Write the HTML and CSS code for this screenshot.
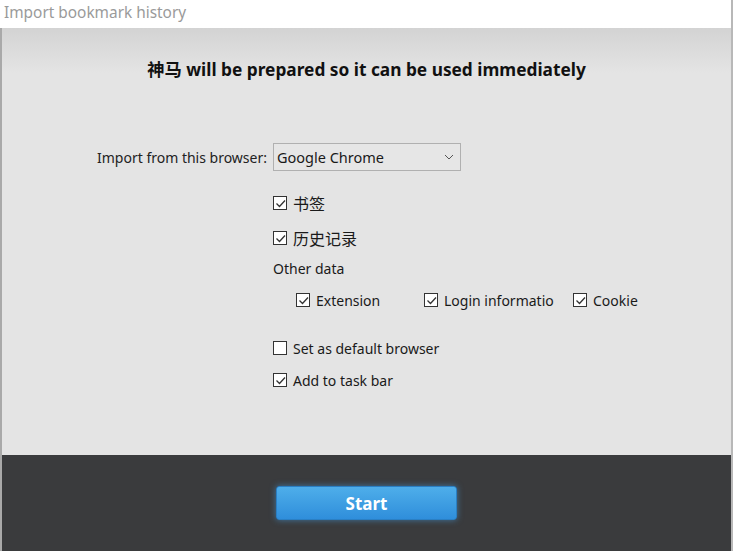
FILE: index.html
```html
<!DOCTYPE html>
<html lang="en">
<head>
    <meta charset="UTF-8">
    <title>Import bookmark history</title>
    <link rel="stylesheet" href="styles.css">
</head>
<body>
<div class="window">

    <!-- Title Bar -->
    <div class="titlebar">Import bookmark history</div>

    <!-- Main Panel -->
    <div class="panel">
        <h1 class="heading">神马 will be prepared so it can be used immediately</h1>

        <div class="form">
            <label class="field-label">Import from this browser:</label>
            <div class="select">
                <span>Google Chrome</span>
                <svg class="chevron" width="10" height="6" viewBox="0 0 10 6"><path d="M1 1 L5 5 L9 1" fill="none" stroke="#555" stroke-width="1"/></svg>
            </div>

            <div class="col2 row-first cjk"><span class="check on"><svg width="11" height="11" viewBox="0 0 11 11"><path d="M1.5 5.5 L4.5 8.5 L10 2.5" fill="none" stroke="#333" stroke-width="1.3"/></svg></span>书签</div>
            <div class="col2 row cjk"><span class="check on"><svg width="11" height="11" viewBox="0 0 11 11"><path d="M1.5 5.5 L4.5 8.5 L10 2.5" fill="none" stroke="#333" stroke-width="1.3"/></svg></span>历史记录</div>
            <div class="col2 other-title">Other data</div>
            <div class="col2 other-row">
                <div class="other-item w1"><span class="check on"><svg width="11" height="11" viewBox="0 0 11 11"><path d="M1.5 5.5 L4.5 8.5 L10 2.5" fill="none" stroke="#333" stroke-width="1.3"/></svg></span>Extension</div>
                <div class="other-item w2"><span class="check on"><svg width="11" height="11" viewBox="0 0 11 11"><path d="M1.5 5.5 L4.5 8.5 L10 2.5" fill="none" stroke="#333" stroke-width="1.3"/></svg></span>Login informatio</div>
                <div class="other-item"><span class="check on"><svg width="11" height="11" viewBox="0 0 11 11"><path d="M1.5 5.5 L4.5 8.5 L10 2.5" fill="none" stroke="#333" stroke-width="1.3"/></svg></span>Cookie</div>
            </div>
            <div class="col2 row-gap"><span class="check"></span>Set as default browser</div>
            <div class="col2 row-last"><span class="check on"><svg width="11" height="11" viewBox="0 0 11 11"><path d="M1.5 5.5 L4.5 8.5 L10 2.5" fill="none" stroke="#333" stroke-width="1.3"/></svg></span>Add to task bar</div>
        </div>
    </div>

    <!-- Footer -->
    <div class="footer">
        <button class="start-btn">Start</button>
    </div>
</div>
</body>
</html>
```

FILE: styles.css
```css
/* General */
html, body {
    margin: 0;
    padding: 0;
}

body {
    font-family: 'Noto Sans', 'Noto Sans CJK SC', sans-serif;
    background-color: #ffffff;
    color: #1a1a1a;
}

.window {
    width: 731px;
    height: 551px;
    display: flex;
    flex-direction: column;
    border-right: 2px solid #b8b8b8;
}

/* Title bar */
.titlebar {
    height: 28px;
    line-height: 26px;
    padding-left: 4px;
    font-size: 15.4px;
    color: #9a9a9a;
    background-color: #ffffff;
}

/* Panel */
.panel {
    flex: 1;
    display: flex;
    flex-direction: column;
    border-left: 2px solid #a9a9a9;
    background: linear-gradient(#d3d3d3, #e4e4e4 45px, #e4e4e4);
}

.heading {
    margin: 30px 0 0 0;
    text-align: center;
    font-size: 17.3px;
    font-weight: bold;
    color: #111;
    height: 24px;
    line-height: 24px;
}

.form {
    display: grid;
    grid-template-columns: 265px auto;
    column-gap: 6px;
    margin-top: 61px;
    font-size: 14px;
}

.field-label {
    text-align: right;
    align-self: center;
    color: #222;
}

.select {
    height: 28px;
    border: 1px solid #b0b0b0;
    background-color: #e6e6e6;
    display: flex;
    align-items: center;
    justify-content: space-between;
    padding: 0 6px 0 3px;
    box-sizing: border-box;
    width: 188px;
    font-size: 14.5px;
}

.col2 {
    grid-column: 2;
    display: flex;
    align-items: center;
    height: 20px;
}

.cjk {
    font-size: 16px;
}

.row-first {
    margin-top: 22px;
}

.row {
    margin-top: 15px;
}

.other-title {
    margin-top: 10px;
}

.other-row {
    margin-top: 12px;
    padding-left: 23px;
}

.other-item {
    display: flex;
    align-items: center;
}

.w1 {
    width: 128px;
}

.w2 {
    width: 149px;
}

.row-gap {
    margin-top: 28px;
}

.row-last {
    margin-top: 12px;
}

/* Checkbox */
.check {
    width: 14px;
    height: 14px;
    border: 1px solid #333;
    background-color: #fff;
    margin-right: 6px;
    box-sizing: border-box;
    display: flex;
    align-items: center;
    justify-content: center;
    flex-shrink: 0;
}

/* Footer */
.footer {
    height: 96px;
    background-color: #3a3b3d;
    border-left: 2px solid #a9a9a9;
    display: flex;
    justify-content: center;
    align-items: flex-start;
}

.start-btn {
    margin-top: 31px;
    width: 181px;
    height: 34px;
    border: 1px solid #2a7fc4;
    border-radius: 3px;
    background: linear-gradient(#4eaeea, #2f8edb);
    color: #fff;
    font-family: 'Noto Sans', sans-serif;
    font-size: 17px;
    font-weight: bold;
    box-shadow: 0 0 6px rgba(70, 160, 230, 0.6);
    cursor: pointer;
}
```
